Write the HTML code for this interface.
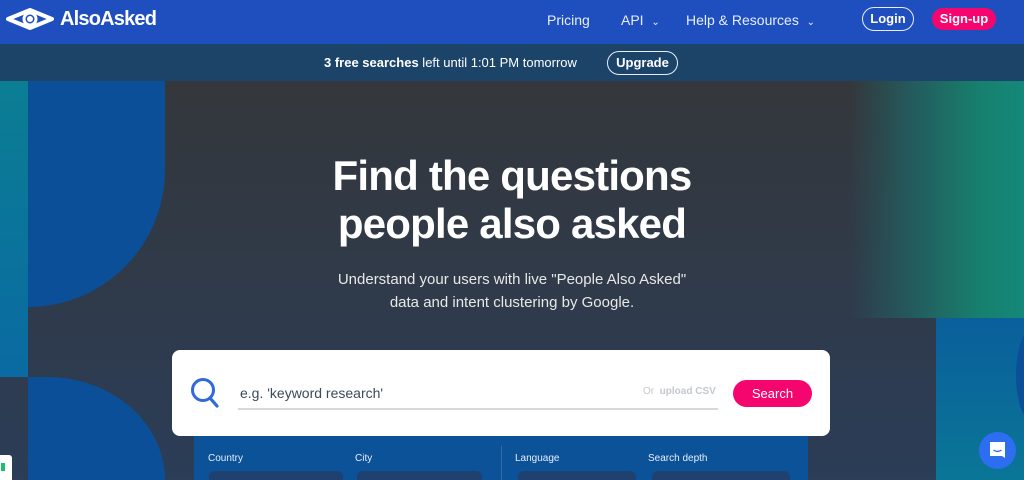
<!DOCTYPE html>
<html style="width:1024px;height:480px;overflow:hidden"><head><meta charset="utf-8"><style>
*{margin:0;padding:0;box-sizing:border-box}
body{width:1024px;height:480px;overflow:hidden;font-family:"Liberation Sans",sans-serif;position:relative;background:linear-gradient(#363636,#2b3d57)}
.abs{position:absolute}
header{position:absolute;left:0;top:0;width:1024px;height:44px;background:#1f4fbf;color:#fff}
.nav{position:absolute;top:12px;font-size:14px;color:#e8eefc}
.banner{position:absolute;left:0;top:44px;width:1024px;height:37px;background:#1c4468;color:#fff;font-size:13px}
.pill{position:absolute;border:1.5px solid #e8eefc;border-radius:13px;color:#fff;font-weight:bold;font-size:13px;text-align:center}
h1{position:absolute;left:0;width:1024px;top:152px;text-align:center;color:#fff;font-size:42px;font-weight:bold;line-height:48px;letter-spacing:-0.8px}
.sub{position:absolute;left:0;width:1024px;top:268px;text-align:center;color:#e8e8e8;font-size:15px;line-height:23px}
.lab{position:absolute;top:453px;font-size:10px;color:#e8eefc}
.sel{position:absolute;top:471px;height:20px;background:#1e416f;border-radius:6px}
</style></head><body>
<div class="abs" style="left:0;top:81px;width:28px;height:296px;background:linear-gradient(#0b7e93,#0a6aa2)"></div>
<div class="abs" style="left:28px;top:81px;width:137px;height:226px;background:#0a4f97;border-bottom-right-radius:137px"></div>
<div class="abs" style="left:28px;top:377px;width:137px;height:103px;background:#0a4f97;border-top-right-radius:137px 120px"></div>
<div class="abs" style="left:850px;top:81px;width:174px;height:237px;background:linear-gradient(90deg,rgba(54,60,66,0),#245a5c 35%,#17806e 75%,#14887a)"></div>
<div class="abs" style="left:936px;top:318px;width:88px;height:162px;background:linear-gradient(#0a5f9c,#0a7696)"></div>
<div class="abs" style="left:1016px;top:330px;width:30px;height:90px;border-radius:50%;background:#0a4f97"></div>
<div class="abs" style="left:0;top:455px;width:12px;height:25px;background:#fff;border-radius:0 3px 0 0"><div style="margin:8px 0 0 1px;width:4px;height:8px;background:#1cbf6e"></div></div>

<header>
<svg class="abs" style="left:6px;top:8px" width="48" height="22" viewBox="0 0 48 22"><path d="M2 11 L24 2 L46 11 L24 20 Z" fill="none" stroke="#fff" stroke-width="4" stroke-linejoin="round"/><circle cx="24" cy="11" r="6" fill="none" stroke="#fff" stroke-width="3"/><circle cx="24" cy="11" r="3" fill="#fff"/></svg>
<div class="abs" style="left:60px;top:8px;font-size:20px;color:#fff;letter-spacing:-0.8px;font-weight:bold">AlsoAsked</div>
<div class="nav" style="left:547px">Pricing</div>
<div class="nav" style="left:621px">API &nbsp;<span style="font-size:10px">&#8964;</span></div>
<div class="nav" style="left:686px">Help &amp; Resources &nbsp;<span style="font-size:10px">&#8964;</span></div>
<div class="pill" style="left:862px;top:7px;width:52px;height:24px;line-height:21px">Login</div>
<div class="pill" style="left:932px;top:8px;width:64px;height:22px;line-height:22px;background:#f5066f;border:none">Sign-up</div>
</header>
<div class="banner">
<div class="abs" style="left:324px;top:11px"><b>3 free searches</b> left until 1:01 PM tomorrow</div>
<div class="pill" style="left:607px;top:7px;width:71px;height:24px;line-height:21px">Upgrade</div>
</div>

<h1>Find the questions<br>people also asked</h1>
<div class="sub">Understand your users with live "People Also Asked"<br>data and intent clustering by Google.</div>

<div class="abs" style="left:194px;top:436px;width:614px;height:44px;background:#0b5299;overflow:hidden">
<div class="abs" style="left:307px;top:10px;width:1px;height:34px;background:#3a6aaa"></div>
</div>
<div class="lab" style="left:208px">Country</div>
<div class="lab" style="left:355px">City</div>
<div class="lab" style="left:515px">Language</div>
<div class="lab" style="left:648px">Search depth</div>
<div class="sel" style="left:209px;width:134px;height:9px;border-radius:6px 6px 0 0"></div>
<div class="sel" style="left:357px;width:125px;height:9px;border-radius:6px 6px 0 0"></div>
<div class="sel" style="left:518px;width:118px;height:9px;border-radius:6px 6px 0 0"></div>
<div class="sel" style="left:652px;width:138px;height:9px;border-radius:6px 6px 0 0"></div>

<div class="abs" style="left:172px;top:350px;width:658px;height:86px;background:#fff;border-radius:8px">
<svg class="abs" style="left:18px;top:27px" width="30" height="32" viewBox="0 0 30 32"><circle cx="13" cy="13" r="10.5" fill="none" stroke="#2f6ad8" stroke-width="3"/><path d="M20 21 L27 29" stroke="#2f6ad8" stroke-width="3.2" stroke-linecap="round"/></svg>
<div class="abs" style="left:68px;top:35px;font-size:14px;color:#3a4a5a">e.g. 'keyword research'</div>
<div class="abs" style="left:66px;top:58px;width:480px;height:1.5px;background:#d8d8d8"></div>
<div class="abs" style="left:471px;top:36px;font-size:10px;color:#c4c8cc">Or &nbsp;<b>upload CSV</b></div>
<div class="abs" style="left:561px;top:30px;width:79px;height:27px;border-radius:14px;background:#f5066f;color:#fff;font-size:13px;text-align:center;line-height:27px">Search</div>
</div>

<div class="abs" style="left:979px;top:432px;width:37px;height:37px;border-radius:50%;background:#2d6ef0"></div>
<svg class="abs" style="left:987px;top:440px" width="21" height="21" viewBox="0 0 21 21"><path d="M3 2 H18 V18 L15 16 H3 Z" fill="#fff"/><path d="M6.5 10 Q10.5 13 14.5 10" fill="none" stroke="#2d6ef0" stroke-width="1.4"/></svg>
</body></html>
